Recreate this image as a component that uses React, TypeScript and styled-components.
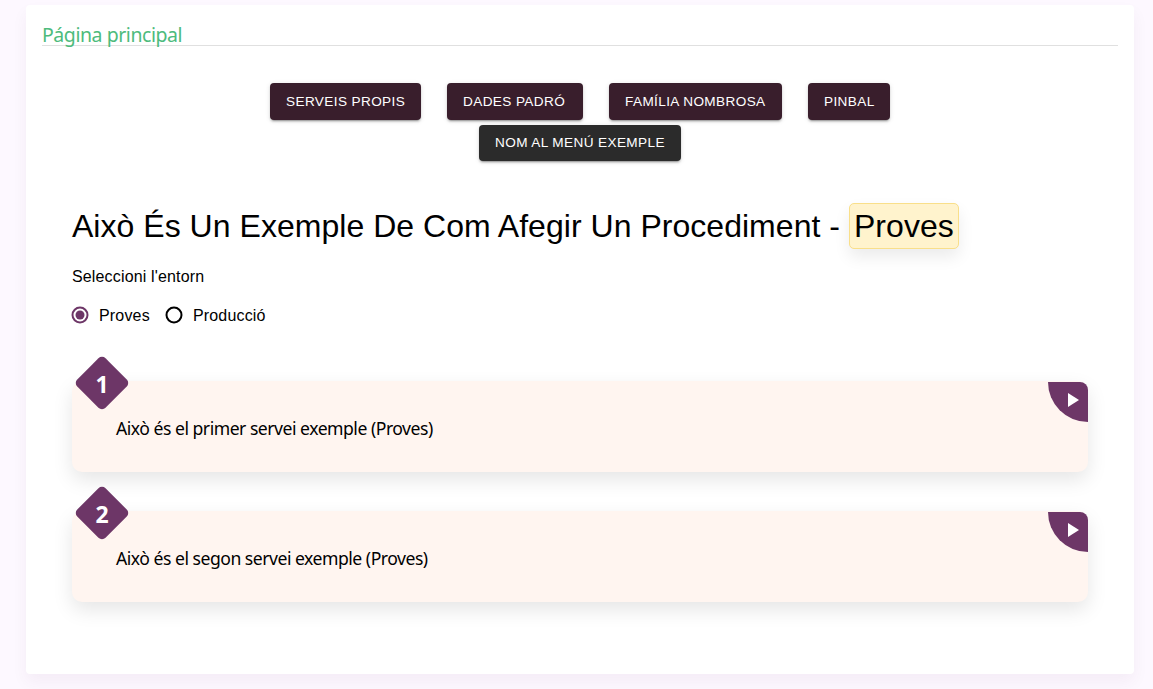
import React, { useState } from "react";
import styled, { createGlobalStyle } from "styled-components";

const plum = "#6d3667";

const GlobalStyle = createGlobalStyle`
  *, *::before, *::after { box-sizing: border-box; }
  body {
    margin: 0;
    background: #fdf8ff;
    color: #000;
    font-family: "Liberation Sans", Arial, sans-serif;
  }
`;

const Page = styled.div`
  height: 689px;
  padding: 5px 19px 15px 26px;
  overflow: hidden;
`;

const Panel = styled.main`
  height: 669px;
  padding: 16px;
  border-radius: 4px;
  background: #fff;
  box-shadow: 0 8px 16px rgba(70, 20, 70, 0.05);
`;

const Breadcrumb = styled.header`
  height: 25px;
  border-bottom: 1px solid #e0e0e0;
`;

const HomeLink = styled.a`
  display: block;
  width: max-content;
  color: #4dbb7c;
  font: 400 19.5px/28px "Noto Sans", sans-serif;
  letter-spacing: -0.45px;
  white-space: nowrap;
`;

const Menu = styled.nav`
  display: flex;
  flex-direction: column;
  align-items: center;
  gap: 5px;
  margin-top: 37px;
`;

const MenuRow = styled.div`
  display: flex;
  gap: 26px;
`;

const MenuButton = styled.button<{ $width: number; $active?: boolean }>`
  width: ${(p) => p.$width}px;
  height: ${(p) => (p.$active ? 36 : 37)}px;
  padding: 0 0 0 16px;
  border: 0;
  border-radius: 4px;
  background: ${(p) => (p.$active ? "#2b2b2b" : "#391e2c")};
  color: #fff;
  font: 400 13.6px/36px "Liberation Sans", Arial, sans-serif;
  letter-spacing: 0.38px;
  text-align: left;
  text-transform: uppercase;
  white-space: nowrap;
  box-shadow: 0 3px 1px -2px rgba(0, 0, 0, 0.2), 0 2px 2px 0 rgba(0, 0, 0, 0.14),
    0 1px 5px 0 rgba(0, 0, 0, 0.12);
`;

const Content = styled.section`
  padding: 42px 30px 0;
`;

const Title = styled.h1`
  display: flex;
  align-items: center;
  gap: 9px;
  height: 46px;
  margin: 0;
  font-weight: 400;
  font-size: 32px;
  line-height: 44px;
  letter-spacing: 0.03px;
  white-space: nowrap;
`;

const Environment = styled.span`
  min-width: 110px;
  height: 46px;
  padding: 0 4px;
  border: 1px solid #f9df8a;
  border-radius: 5px;
  background: #fff3cd;
  box-shadow: 0 8px 16px rgba(0, 0, 0, 0.08);
`;

const Prompt = styled.p`
  margin: 18px 0 0;
  font-size: 16px;
  line-height: 20px;
  letter-spacing: 0.15px;
`;

const Choices = styled.div`
  display: flex;
  gap: 16px;
  margin-top: 19px;
`;

const Choice = styled.label`
  display: flex;
  align-items: center;
  gap: 10px;
  height: 20px;
  font-size: 16px;
  letter-spacing: 0.18px;
`;

const Radio = styled.input`
  appearance: none;
  display: grid;
  place-items: center;
  width: 17px;
  height: 17px;
  margin: 0 0 2px;
  border: 2px solid #000;
  border-radius: 50%;
  background: transparent;
  transform: translate(-0.5px, -0.5px);

  &:checked { border-color: ${plum}; }
  &:checked::before {
    content: "";
    width: 9px;
    height: 9px;
    border-radius: 50%;
    background: ${plum};
  }
`;

const Services = styled.div`
  display: flex;
  flex-direction: column;
  gap: 39px;
  margin-top: 55px;
`;

const ServiceCard = styled.article`
  position: relative;
  display: flex;
  align-items: center;
  height: 91px;
  padding: 2px 44px 0;
  border-radius: 10px;
  background: #fff5f0;
  box-shadow: 0 8px 20px rgba(0, 0, 0, 0.1);
`;

const ServiceName = styled.span`
  font: 400 17.6px/26px "Noto Sans", sans-serif;
  letter-spacing: -0.49px;
  white-space: nowrap;
`;

const NumberBadge = styled.div`
  position: absolute;
  top: -25px;
  left: 3px;
  display: grid;
  place-items: center;
  width: 54px;
  height: 54px;
  color: #fff;
  font: 700 23px/30px "Noto Sans", sans-serif;

  &::before {
    content: "";
    grid-area: 1 / 1;
    width: 40px;
    height: 40px;
    border-radius: 5px;
    background: ${plum};
    transform: rotate(45deg);
  }
`;

const BadgeText = styled.span`
  grid-area: 1 / 1;
  z-index: 1;
  padding-top: 2px;
`;

const RunButton = styled.button`
  position: absolute;
  top: 1px;
  right: 0;
  width: 40px;
  height: 40px;
  padding: 0 0 4px 10px;
  border: 0;
  border-radius: 0 8px 0 40px;
  background: ${plum};
  display: grid;
  place-items: center;
`;

const menu = [
  { label: "Serveis propis", width: 151 },
  { label: "Dades padró", width: 136 },
  { label: "Família nombrosa", width: 173 },
  { label: "Pinbal", width: 82 },
];

const services = ["Això és el primer servei exemple", "Això és el segon servei exemple"];
const environments = ["Proves", "Producció"];

export default function App() {
  const [environment, setEnvironment] = useState("Proves");
  return (
    <>
      <GlobalStyle />
      <Page>
        <Panel>
          <Breadcrumb>
            <HomeLink>Página principal</HomeLink>
          </Breadcrumb>
          <Menu>
            <MenuRow>
              {menu.map((item) => (
                <MenuButton key={item.label} $width={item.width}>{item.label}</MenuButton>
              ))}
            </MenuRow>
            <MenuButton $width={202} $active>Nom al menú exemple</MenuButton>
          </Menu>
          <Content>
            <Title>
              <span>Això És Un Exemple De Com Afegir Un Procediment -</span>
              <Environment>{environment}</Environment>
            </Title>
            <Prompt>Seleccioni l'entorn</Prompt>
            <Choices>
              {environments.map((name) => (
                <Choice key={name}>
                  <Radio
                    type="radio"
                    name="environment"
                    checked={environment === name}
                    onChange={() => setEnvironment(name)}
                  />
                  {name}
                </Choice>
              ))}
            </Choices>
            <Services>
              {services.map((name, index) => (
                <ServiceCard key={name}>
                  <NumberBadge><BadgeText>{index + 1}</BadgeText></NumberBadge>
                  <ServiceName>{name} ({environment})</ServiceName>
                  <RunButton aria-label={name}>
                    <svg width="11" height="14" viewBox="0 0 11 14"><path d="M0 0 11 7 0 14Z" fill="#fff" /></svg>
                  </RunButton>
                </ServiceCard>
              ))}
            </Services>
          </Content>
        </Panel>
      </Page>
    </>
  );
}
